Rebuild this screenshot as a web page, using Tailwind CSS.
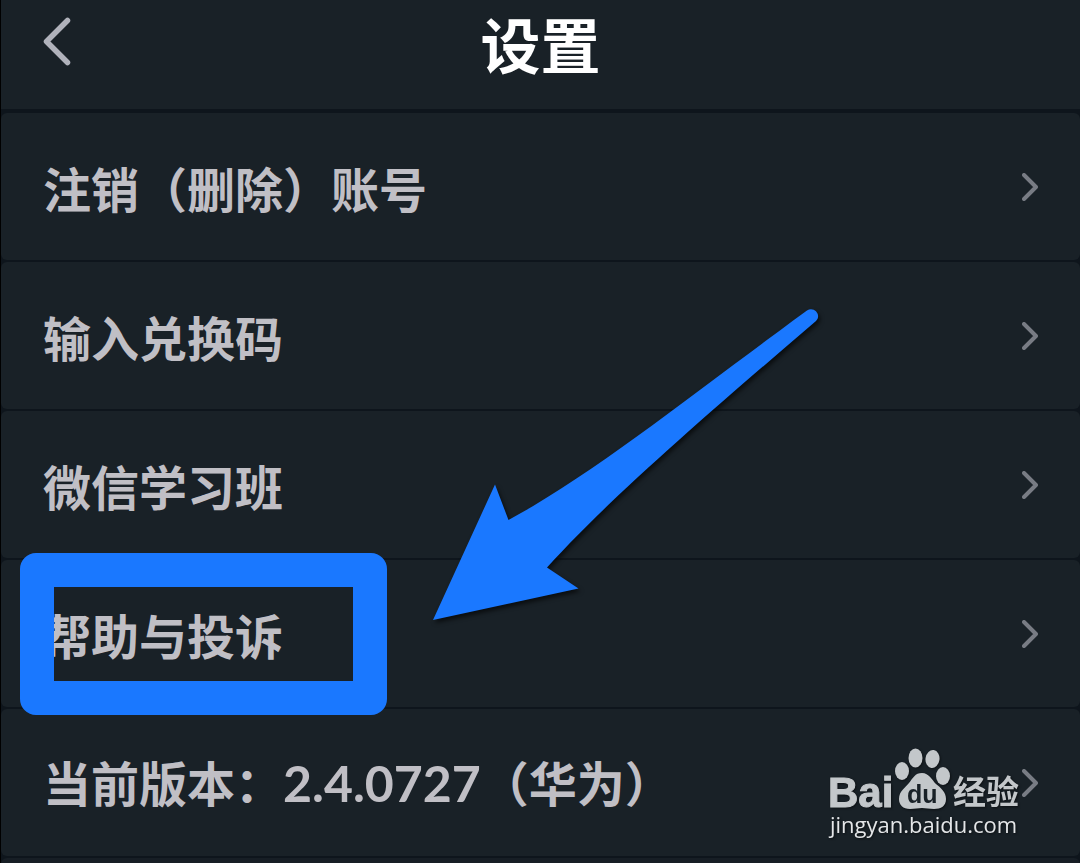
<!DOCTYPE html>
<html lang="zh-CN">

<head>
  <meta charset="UTF-8" />
  <meta name="viewport" content="width=device-width, initial-scale=1.0" />
  <title>设置</title>
  <script src="https://cdn.jsdelivr.net/npm/@tailwindcss/browser@4"></script>
</head>

<body class="bg-[#0e151c] text-[#c0bfc5] font-['Noto_Sans_CJK_SC',sans-serif] overflow-hidden">

  <div class="relative min-h-screen overflow-hidden border-l border-black">

    <!-- Header -->
    <header class="relative flex items-center justify-center h-[109px] pb-6 bg-[#192127]">
      <button type="button" aria-label="返回" class="absolute left-10 top-4 text-[#b0b2bb]">
        <svg class="w-8 h-[52px]" viewBox="0 0 32 52" fill="none" stroke="currentColor" stroke-width="5.500"
          stroke-linecap="round" stroke-linejoin="round">
          <path d="M26.500 4.500L5.500 25.500L26.500 46.500" />
        </svg>
      </button>
      <h1 class="text-[60px] leading-none font-bold text-white">设置</h1>
    </header>

    <!-- Settings list -->
    <ul class="flex flex-col gap-0.5 pt-1 text-[48px] leading-none font-bold">
      <li>
        <a href="#" class="flex items-center justify-between h-[147px] px-[42px] rounded-md bg-[#192127]">
          <span>注销（删除）账号</span>
          <svg class="w-4 h-7 text-[#787c84]" viewBox="0 0 16 28" fill="none" stroke="currentColor" stroke-width="4" stroke-linecap="round" stroke-linejoin="round"><path d="M2 2L14 14L2 26" /></svg>
        </a>
      </li>
      <li>
        <a href="#" class="flex items-center justify-between h-[147px] px-[42px] rounded-md bg-[#192127]">
          <span>输入兑换码</span>
          <svg class="w-4 h-7 text-[#787c84]" viewBox="0 0 16 28" fill="none" stroke="currentColor" stroke-width="4" stroke-linecap="round" stroke-linejoin="round"><path d="M2 2L14 14L2 26" /></svg>
        </a>
      </li>
      <li>
        <a href="#" class="flex items-center justify-between h-[147px] px-[42px] rounded-md bg-[#192127]">
          <span>微信学习班</span>
          <svg class="w-4 h-7 text-[#787c84]" viewBox="0 0 16 28" fill="none" stroke="currentColor" stroke-width="4" stroke-linecap="round" stroke-linejoin="round"><path d="M2 2L14 14L2 26" /></svg>
        </a>
      </li>
      <li class="relative">
        <a href="#" class="flex items-center justify-between h-[147px] px-[42px] rounded-md bg-[#192127]">
          <span>帮助与投诉</span>
          <svg class="w-4 h-7 text-[#787c84]" viewBox="0 0 16 28" fill="none" stroke="currentColor" stroke-width="4" stroke-linecap="round" stroke-linejoin="round"><path d="M2 2L14 14L2 26" /></svg>
        </a>
        <!-- Highlight frame -->
        <div class="absolute z-10 -top-[7px] left-[19px] w-[367px] h-[162px] border-[34px] border-[#1a78ff] rounded-2xl pointer-events-none"></div>
      </li>
      <li>
        <a href="#" class="flex items-center justify-between h-[147px] px-[42px] rounded-md bg-[#192127]">
          <span>当前版本：<span class="font-['Lato',sans-serif] text-[50px] leading-none">2.4.0727</span>（华为）</span>
          <svg class="w-4 h-7 text-[#787c84]" viewBox="0 0 16 28" fill="none" stroke="currentColor" stroke-width="4" stroke-linecap="round" stroke-linejoin="round"><path d="M2 2L14 14L2 26" /></svg>
        </a>
      </li>
      <li class="h-8 bg-[#171e25] rounded-md"></li>
    </ul>

    <!-- Arrow -->
    <svg class="absolute left-[419px] top-[290px] w-[410px] h-[340px] drop-shadow-[2px_3px_2px_rgba(0,0,0,0.6)] pointer-events-none"
      viewBox="0 0 410 340" fill="#1a78ff">
      <path d="M13 330L75 194.500L88.500 230C175 183 270 106 387 20.500C394 16 402 25 396 31C291 121 191 207 127 277.500L158.500 298.500Z" />
    </svg>

    <!-- Watermark -->
    <svg class="absolute left-[819px] top-[740px] w-[210px] h-[110px] drop-shadow-[1px_1px_1px_rgba(0,0,0,0.5)] pointer-events-none"
      viewBox="0 0 210 110" fill="#c3c7ca">
      <text x="8" y="67" font-family="Liberation Sans, sans-serif" font-size="42" font-weight="700" stroke="#c3c7ca">Bai</text>
      <ellipse cx="82" cy="31" rx="7" ry="9" />
      <ellipse cx="95.500" cy="18" rx="7" ry="9.500" />
      <ellipse cx="112.500" cy="19" rx="7" ry="9" transform="rotate(8 112.500 19)" />
      <ellipse cx="123" cy="36" rx="7" ry="9" />
      <path d="M102 33C109 33 112 40 116 44C121 48 126 52 126 59C126 66 121 69 114 69C109 69 106 68 102 68C98 68 95 69 90 69C83 69 79 65 79 59C79 51 85 48 89 43C93 38 95 33 102 33Z" />
      <text x="87" y="63" font-family="Liberation Sans, sans-serif" font-size="25" font-weight="700" fill="#192127">du</text>
      <text x="133" y="64" font-family="Noto Sans CJK SC, sans-serif" font-size="33" font-weight="700">经验</text>
      <text x="10" y="93" font-family="Open Sans, sans-serif" font-size="22" font-weight="500" fill="#e4e6e8">jingyan.baidu.com</text>
    </svg>

  </div>

</body>

</html>
